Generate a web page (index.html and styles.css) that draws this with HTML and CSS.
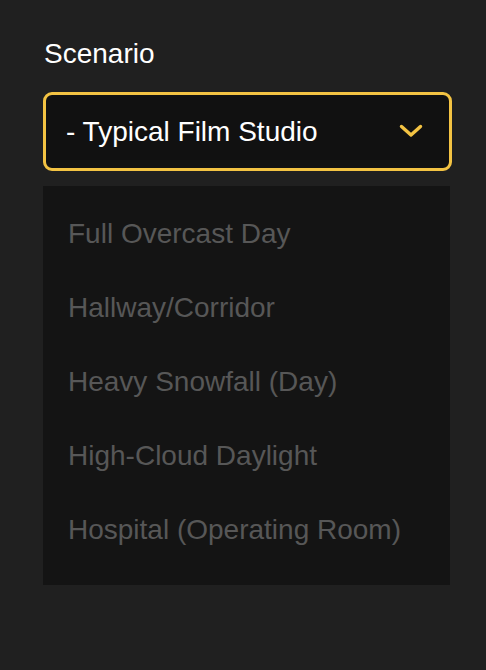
FILE: index.html
```html
<!DOCTYPE html>
<html>
<head>
<meta charset="utf-8">
<link rel="stylesheet" href="styles.css">
</head>
<body>
<div class="panel">
  <div class="label">Scenario</div>
  <div class="select">
    <span class="value">- Typical Film Studio</span>
    <svg class="chev" width="24" height="14" viewBox="0 0 24 14"><path d="M2.5 2.5 L12 11 L21.5 2.5" fill="none" stroke="#f3c343" stroke-width="3.4" stroke-linecap="round" stroke-linejoin="round"/></svg>
  </div>
  <ul class="menu">
    <li>Full Overcast Day</li>
    <li>Hallway/Corridor</li>
    <li>Heavy Snowfall (Day)</li>
    <li>High-Cloud Daylight</li>
    <li>Hospital (Operating Room)</li>
  </ul>
</div>
</body>
</html>
```
FILE: styles.css
```css
html, body {
  margin: 0;
  padding: 0;
  background: #202020;
  height: 100%;
}
body {
  font-family: "Liberation Sans", Arial, sans-serif;
}
.panel {
  padding: 38px 34px 0 43px;
  display: flex;
  flex-direction: column;
}
.label {
  color: #ffffff;
  font-size: 28px;
  line-height: 32px;
  padding-left: 1px;
}
.select {
  margin-top: 22px;
  height: 79px;
  box-sizing: border-box;
  border: 3px solid #f3c343;
  border-radius: 9px;
  background: #111111;
  display: flex;
  align-items: center;
  justify-content: space-between;
  padding: 1px 26px 0 20px;
}
.value {
  color: #ffffff;
  font-size: 28px;
  line-height: 32px;
}
.chev {
  display: block;
  margin-top: -2px;
}
.menu {
  list-style: none;
  margin: 15px 2px 0 0;
  padding: 11px 0 18px 25px;
  background: #141414;
}
.menu li {
  color: #575757;
  font-size: 28px;
  line-height: 74px;
  height: 74px;
}
```
